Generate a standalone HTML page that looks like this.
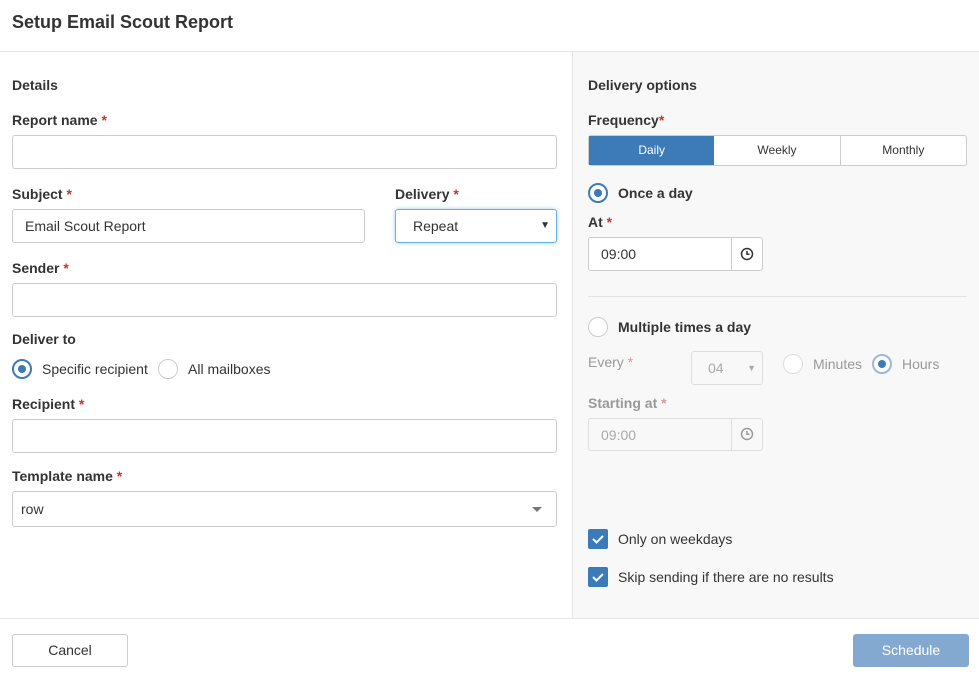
<!DOCTYPE html><html><head><style>
body{margin:0;width:979px;height:680px;position:relative;font-family:"Liberation Sans",sans-serif;font-size:14px;color:#333;background:#fff;overflow:hidden}
.a{position:absolute}
.b{font-weight:bold}
.r{color:#c0392b}
.in{position:absolute;box-sizing:border-box;border:1px solid #ccc;border-radius:3px;background:#fff;height:34px;padding-left:12px;line-height:32px}
.rad{position:absolute;box-sizing:border-box;width:20px;height:20px;border:1px solid #ccc;border-radius:50%;background:#fff}
.rad.on{border:2px solid #3d7ab8}
.rad.on:after{content:"";position:absolute;left:4px;top:4px;width:8px;height:8px;border-radius:50%;background:#3d7ab8}
.cb{position:absolute;width:20px;height:20px;border-radius:2px;background:#3d7ab8}
</style></head><body>
<div class="a b" style="left:12px;top:12px;font-size:18px">Setup Email Scout Report</div>
<div class="a" style="left:0;top:51px;width:979px;height:1px;background:#e5e5e5"></div>
<div class="a" style="left:572px;top:52px;width:407px;height:566px;background:#f8f8f8;border-left:1px solid #e5e5e5"></div>
<div class="a" style="left:0;top:618px;width:979px;height:1px;background:#e5e5e5"></div>

<div class="a b" style="left:12px;top:77px">Details</div>
<div class="a b" style="left:12px;top:112px">Report name <span class="r">*</span></div>
<div class="in" style="left:12px;top:135px;width:545px"></div>
<div class="a b" style="left:12px;top:186px">Subject <span class="r">*</span></div>
<div class="in" style="left:12px;top:209px;width:353px">Email Scout Report</div>
<div class="a b" style="left:395px;top:186px">Delivery <span class="r">*</span></div>
<div class="in" style="left:395px;top:209px;width:162px;border-color:#66afe9;box-shadow:0 0 4px rgba(102,175,233,.6);padding-left:17px">Repeat<span class="a" style="right:6px;top:0;font-size:10px">▼</span></div>
<div class="a b" style="left:12px;top:260px">Sender <span class="r">*</span></div>
<div class="in" style="left:12px;top:283px;width:545px"></div>
<div class="a b" style="left:12px;top:331px">Deliver to</div>
<div class="rad on" style="left:12px;top:359px"></div>
<div class="a" style="left:42px;top:361px">Specific recipient</div>
<div class="rad" style="left:158px;top:359px"></div>
<div class="a" style="left:188px;top:361px">All mailboxes</div>
<div class="a b" style="left:12px;top:396px">Recipient <span class="r">*</span></div>
<div class="in" style="left:12px;top:419px;width:545px"></div>
<div class="a b" style="left:12px;top:468px">Template name <span class="r">*</span></div>
<div class="in" style="left:12px;top:491px;width:545px;height:36px;padding-left:8px;line-height:34px">row<span class="a" style="right:14px;top:15px;width:0;height:0;border-left:5px solid transparent;border-right:5px solid transparent;border-top:5px solid #777"></span></div>

<div class="a b" style="left:588px;top:77px">Delivery options</div>
<div class="a b" style="left:588px;top:112px">Frequency<span class="r">*</span></div>
<div class="a" style="left:588px;top:135px;width:379px;height:31px;box-sizing:border-box;border:1px solid #ccc;border-radius:3px;background:#fff;display:flex;font-size:12px;line-height:29px;text-align:center">
<div style="flex:1;background:#3d7ab8;color:#fff">Daily</div><div style="flex:1;border-right:1px solid #ccc">Weekly</div><div style="flex:1">Monthly</div></div>
<div class="rad on" style="left:588px;top:183px"></div>
<div class="a b" style="left:618px;top:185px">Once a day</div>
<div class="a b" style="left:588px;top:214px">At <span class="r">*</span></div>
<div class="in" style="left:588px;top:237px;width:175px">09:00</div>
<div class="a" style="left:731px;top:237px;width:1px;height:34px;background:#ccc"></div>
<svg class="a" style="left:739px;top:246px" width="16" height="16" viewBox="0 0 16 16"><circle cx="8" cy="8" r="5.5" fill="none" stroke="#333" stroke-width="1.5"/><path d="M8 5v3.3h2.5" fill="none" stroke="#333" stroke-width="1.5"/></svg>
<div class="a" style="left:588px;top:296px;width:379px;height:1px;background:#e5e5e5"></div>
<div class="rad" style="left:588px;top:317px"></div>
<div class="a b" style="left:618px;top:319px">Multiple times a day</div>
<div class="a" style="left:588px;top:354px;color:#999">Every <span style="color:#d99">*</span></div>
<div class="in" style="left:691px;top:351px;width:72px;height:34px;color:#aaa;background:#f8f8f8;border-color:#ddd;padding-left:16px">04<span class="a" style="right:6px;top:0;font-size:9px">▼</span></div>
<div class="rad" style="left:783px;top:354px;border-color:#ddd"></div>
<div class="a" style="left:813px;top:356px;color:#999">Minutes</div>
<div class="rad on" style="left:872px;top:354px;border-color:#9bb8d8"></div>
<div class="a" style="left:902px;top:356px;color:#999">Hours</div>
<div class="a b" style="left:588px;top:395px;color:#999">Starting at <span style="color:#d99">*</span></div>
<div class="in" style="left:588px;top:418px;width:175px;height:33px;color:#aaa;background:#f8f8f8;border-color:#ddd">09:00</div>
<div class="a" style="left:731px;top:418px;width:1px;height:33px;background:#ddd"></div>
<svg class="a" style="left:739px;top:426px" width="16" height="16" viewBox="0 0 16 16"><circle cx="8" cy="8" r="5.5" fill="none" stroke="#999" stroke-width="1.5"/><path d="M8 5v3.3h2.5" fill="none" stroke="#999" stroke-width="1.5"/></svg>
<div class="cb" style="left:588px;top:529px"><svg width="20" height="20"><path d="M5 10l3.5 3.5L15 7" fill="none" stroke="#fff" stroke-width="2"/></svg></div>
<div class="a" style="left:618px;top:531px">Only on weekdays</div>
<div class="cb" style="left:588px;top:567px"><svg width="20" height="20"><path d="M5 10l3.5 3.5L15 7" fill="none" stroke="#fff" stroke-width="2"/></svg></div>
<div class="a" style="left:618px;top:569px">Skip sending if there are no results</div>

<div class="a" style="left:12px;top:634px;width:116px;height:33px;box-sizing:border-box;border:1px solid #ccc;border-radius:3px;text-align:center;line-height:31px">Cancel</div>
<div class="a" style="left:853px;top:634px;width:116px;height:33px;border-radius:3px;background:#84a9d0;color:#fff;text-align:center;line-height:33px">Schedule</div>
</body></html>
